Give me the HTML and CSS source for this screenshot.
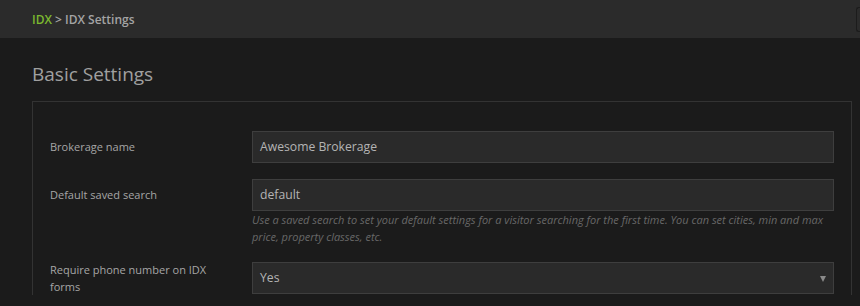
FILE: index.html
```html
<!DOCTYPE html>
<html>
<head>
<meta charset="utf-8">
<link rel="stylesheet" href="styles.css">
</head>
<body>
<header class="topbar">
  <div class="crumbs"><a class="crumb-link">IDX</a> <span class="sep">&gt;</span> <span class="crumb-current">IDX Settings</span></div>
  <div class="top-search"></div>
</header>
<main class="content">
  <h1 class="page-title">Basic Settings</h1>
  <section class="panel">
    <div class="form-row">
      <label class="form-label">Brokerage name</label>
      <div class="form-field">
        <div class="input">Awesome Brokerage</div>
      </div>
    </div>
    <div class="form-row">
      <label class="form-label">Default saved search</label>
      <div class="form-field">
        <div class="input">default</div>
        <p class="help">Use a saved search to set your default settings for a visitor searching for the first time. You can set cities, min and max price, property classes, etc.</p>
      </div>
    </div>
    <div class="form-row">
      <label class="form-label">Require phone number on IDX forms</label>
      <div class="form-field">
        <div class="input select">Yes<span class="caret"></span></div>
      </div>
    </div>
  </section>
</main>
</body>
</html>
```
FILE: styles.css
```css
* { box-sizing: border-box; }
html, body { margin: 0; padding: 0; }
body {
  background: #1b1b1b;
  font-family: "Open Sans", "Liberation Sans", sans-serif;
  color: #a8a8a8;
  width: 860px;
  height: 306px;
  overflow: hidden;
}
.topbar {
  height: 38px;
  background: #2b2b2b;
  display: flex;
  align-items: center;
  padding-left: 32px;
  overflow: hidden;
}
.crumbs {
  flex: 0 0 824px;
  font-size: 12px;
  font-weight: 600;
  color: #a4a4a4;
  white-space: nowrap;
}
.crumb-link { color: #7cb82f; }
.top-search {
  flex: 0 0 4px;
  height: 25px;
  margin-top: 1px;
  border: 1px solid #1c1c1c;
  border-right: none;
  border-radius: 3px 0 0 3px;
  background: #2b2b2b;
}
.content {
  padding: 0 8px 0 32px;
}
.page-title {
  margin: 0;
  padding-top: 23px;
  height: 63px;
  font-size: 19px;
  font-weight: 400;
  line-height: 26px;
  color: #a0a0a0;
}
.panel {
  border: 1px solid #333;
  border-bottom: none;
  padding: 29px 17px 0 17px;
}
.form-row {
  display: grid;
  grid-template-columns: 202px 1fr;
  align-items: start;
  margin-bottom: 16px;
}
.form-label {
  min-height: 32px;
  margin-top: -1px;
  display: flex;
  align-items: center;
  font-size: 11px;
  line-height: 17px;
  color: #a6a6a6;
  padding-right: 20px;
}
.input {
  height: 32px;
  background: #2a2a2a;
  border: 1px solid #3e3e3e;
  font-size: 12.2px;
  line-height: 30px;
  padding: 0 7px;
  color: #b4b4b4;
  position: relative;
}
.help {
  margin: 0 0 1px 0;
  font-size: 11px;
  line-height: 17px;
  font-style: italic;
  color: #686868;
}
.caret {
  position: absolute;
  right: 7px;
  top: 13px;
  width: 0;
  height: 0;
  border-left: 3.5px solid transparent;
  border-right: 3.5px solid transparent;
  border-top: 6px solid #8a8a8a;
}
```
